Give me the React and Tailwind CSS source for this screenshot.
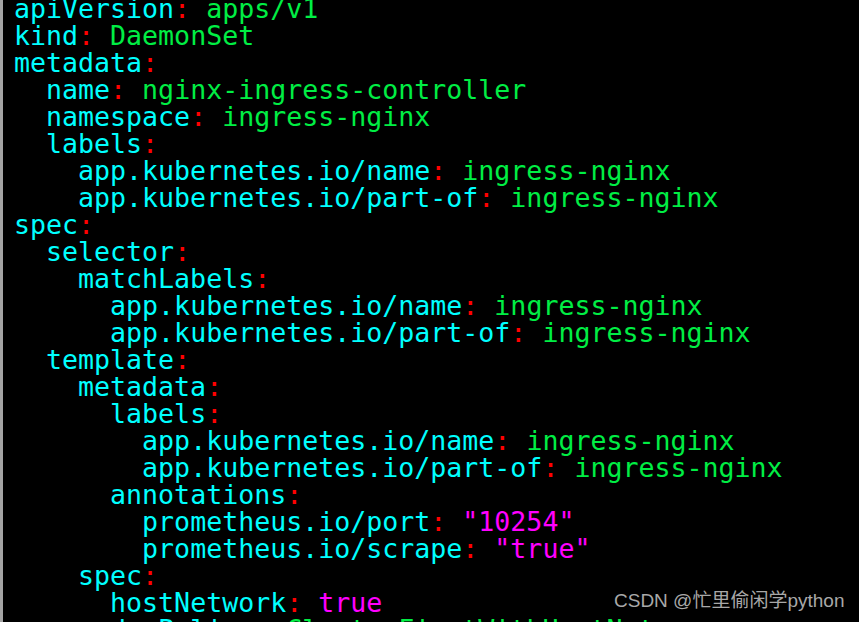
import React from "react";

const K = ({ children }) => <span className="text-[#00ffff]">{children}</span>;
const C = () => <span className="text-[#ff0000]">:</span>;
const V = ({ children }) => <span className="text-[#00ee44]">{children}</span>;
const M = ({ children }) => <span className="text-[#ff00ff]">{children}</span>;

const lines = [
  [0, "apiVersion", "v", "apps/v1"],
  [0, "kind", "v", "DaemonSet"],
  [0, "metadata"],
  [1, "name", "v", "nginx-ingress-controller"],
  [1, "namespace", "v", "ingress-nginx"],
  [1, "labels"],
  [2, "app.kubernetes.io/name", "v", "ingress-nginx"],
  [2, "app.kubernetes.io/part-of", "v", "ingress-nginx"],
  [0, "spec"],
  [1, "selector"],
  [2, "matchLabels"],
  [3, "app.kubernetes.io/name", "v", "ingress-nginx"],
  [3, "app.kubernetes.io/part-of", "v", "ingress-nginx"],
  [1, "template"],
  [2, "metadata"],
  [3, "labels"],
  [4, "app.kubernetes.io/name", "v", "ingress-nginx"],
  [4, "app.kubernetes.io/part-of", "v", "ingress-nginx"],
  [3, "annotations"],
  [4, "prometheus.io/port", "m", '"10254"'],
  [4, "prometheus.io/scrape", "m", '"true"'],
  [2, "spec"],
  [3, "hostNetwork", "m", "true"],
  [3, "dnsPolicy", "v", "ClusterFirstWithHostNet"],
];

export default function App() {
  return (
    <div className="relative w-[859px] h-[622px] overflow-hidden bg-black border-l-[3px] border-[#a4a4a4]">
      <div
        className="pl-[11px] -mt-[5px] text-[26.6px] leading-[27px] whitespace-pre"
        style={{ fontFamily: '"DejaVu Sans Mono", "Liberation Mono", monospace' }}
      >
        {lines.map(([ind, key, t, val], i) => (
          <div key={i} className="h-[27px]">
            {"  ".repeat(ind)}
            <K>{key}</K>
            <C />
            {val !== undefined && " "}
            {val !== undefined && (t === "m" ? <M>{val}</M> : <V>{val}</V>)}
          </div>
        ))}
      </div>
      <div
        className="absolute left-[611px] top-[589px] text-[19px] leading-[24px] text-[#a8a8a8] whitespace-nowrap"
        style={{ fontFamily: '"Liberation Sans", "Noto Sans CJK SC", sans-serif' }}
      >
        CSDN @忙里偷闲学python
      </div>
    </div>
  );
}
